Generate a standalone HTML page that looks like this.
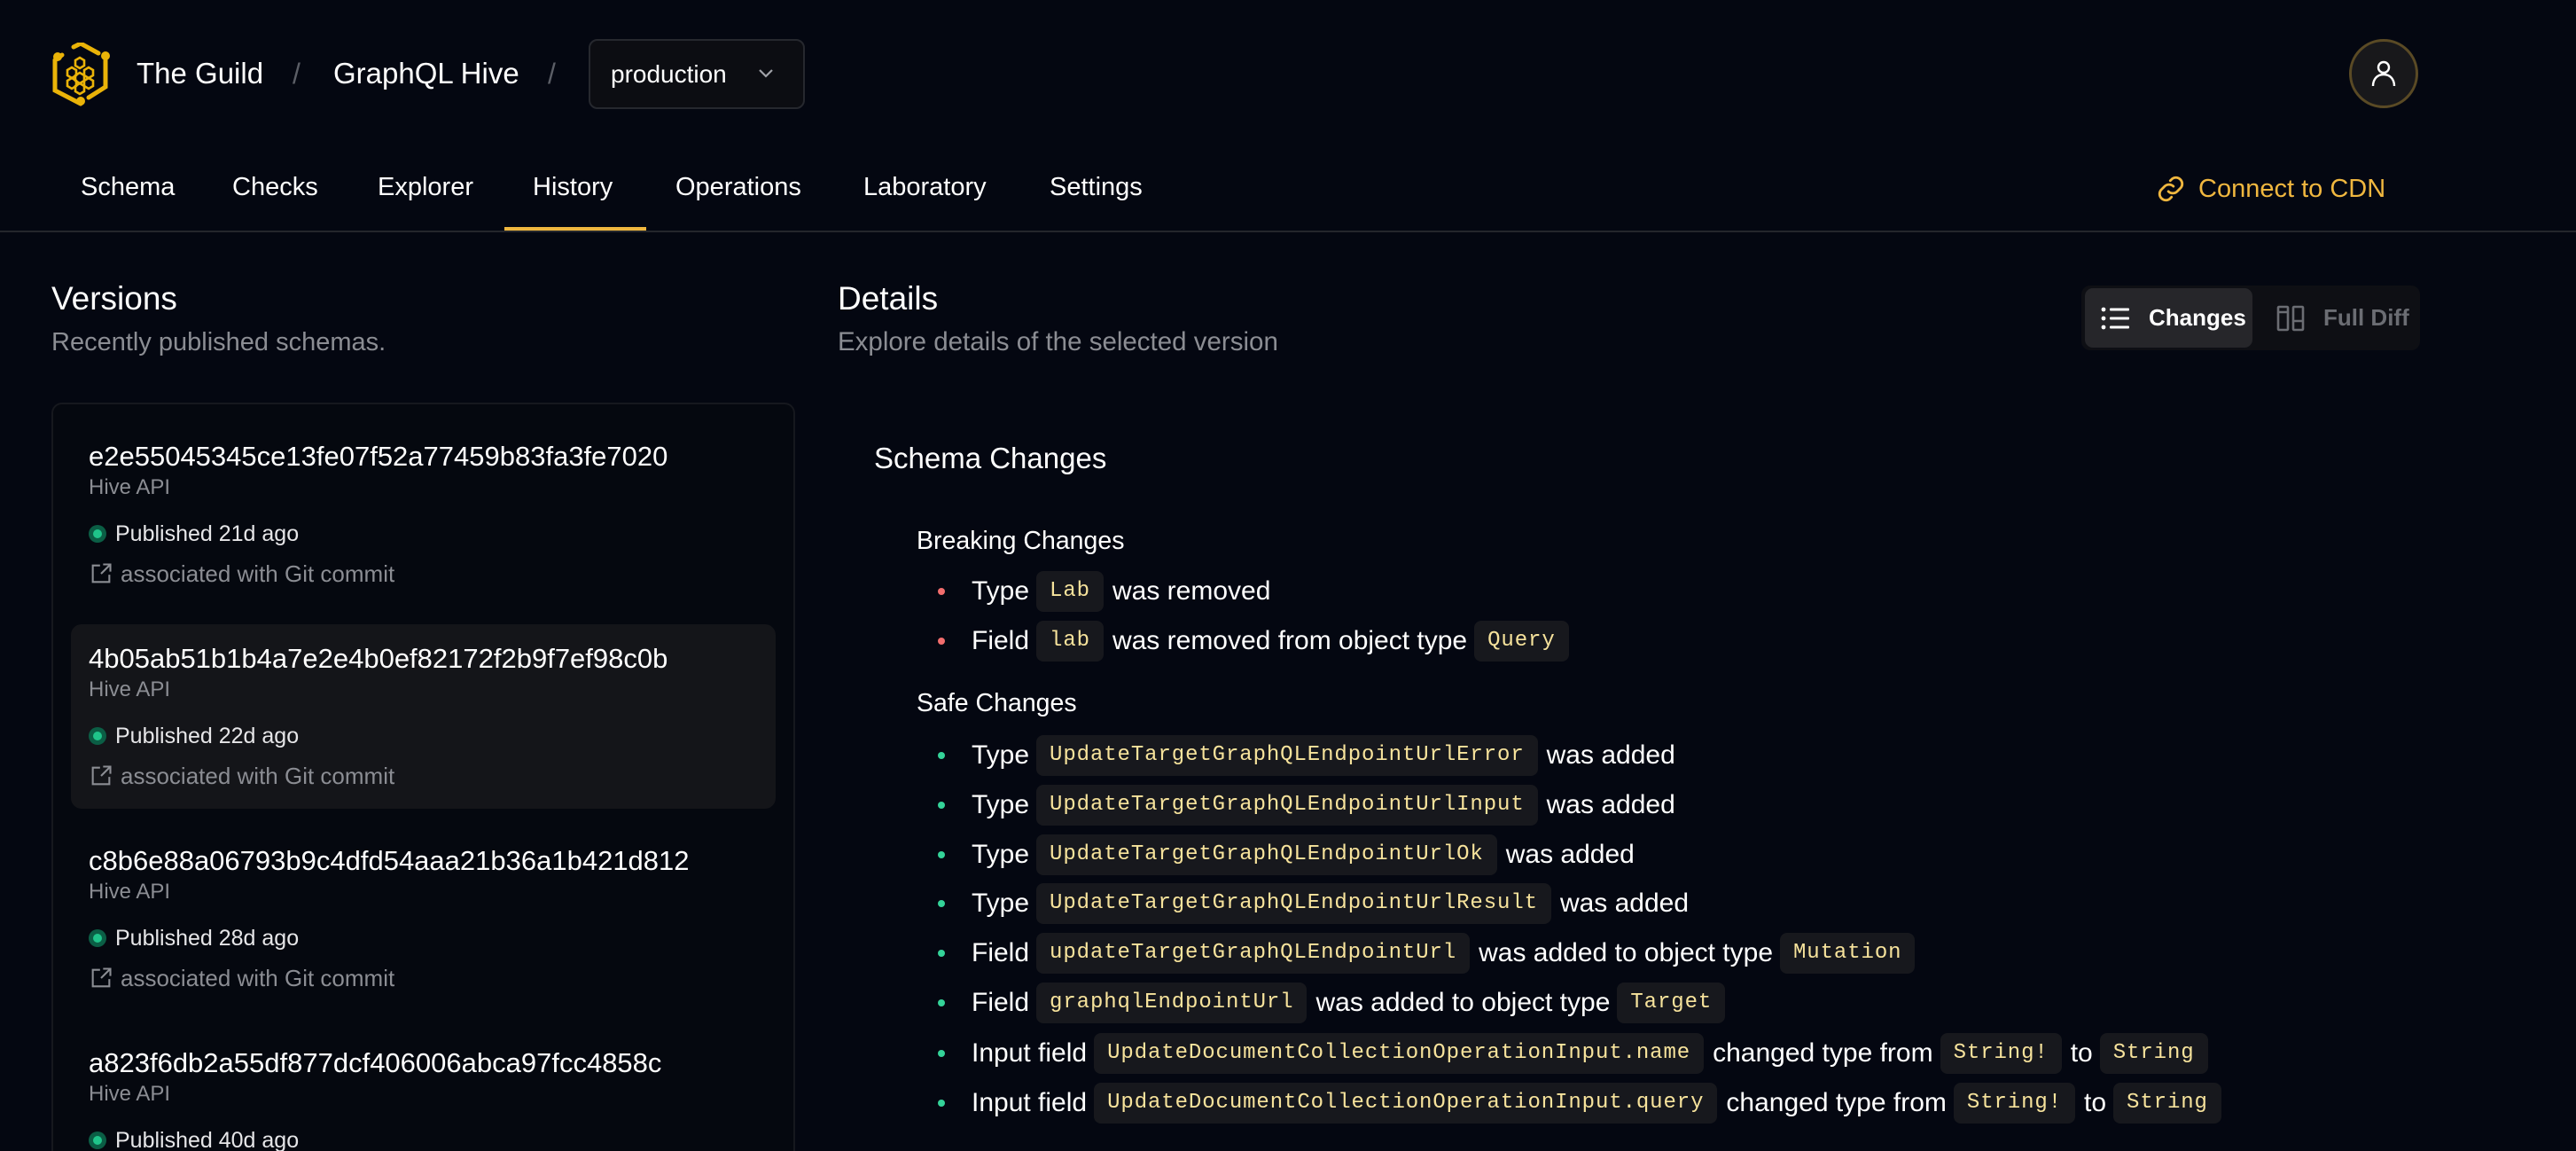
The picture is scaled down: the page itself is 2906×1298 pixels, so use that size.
<!DOCTYPE html>
<html><head><meta charset="utf-8">
<style>
*{margin:0;padding:0;box-sizing:border-box}
html,body{width:2906px;height:1298px;overflow:hidden}
body{background:#040711;color:#fff;font-family:"Liberation Sans",sans-serif;position:relative}
#w{position:absolute;left:0;top:0;width:2906px;height:1298px;overflow:hidden}
.a{position:absolute;white-space:nowrap}
.nav{font-size:29px;line-height:40px;top:191px;color:#fff}
.hash{font-size:31px;line-height:36px;left:100px}
.sub{font-size:24px;line-height:30px;left:100px;color:#8b8d93}
.pub{font-size:25px;line-height:30px;left:100px;color:#e6e6e8;display:flex;align-items:center}
.dot{width:20px;height:20px;border-radius:50%;background:#0b5e45;display:inline-block;position:relative;margin-right:10px}
.dot:after{content:"";position:absolute;left:5px;top:5px;width:10px;height:10px;border-radius:50%;background:#1fc48a}
.assoc{font-size:26px;line-height:30px;left:100px;color:#8b8d93;display:flex;align-items:center}
.row{position:absolute;left:1056px;height:48px;display:flex;align-items:center;font-size:30px;white-space:nowrap}
.b{width:8px;height:8px;border-radius:50%;margin-right:30px;margin-left:2px}
.r{background:#f26d6d}.g{background:#34d399}
.c{font-family:"Liberation Mono",monospace;font-size:24px;letter-spacing:0.9px;color:#f7e39c;background:#17181d;border-radius:8px;height:46px;line-height:46px;padding:0 15px;margin:0 10px 0 8px}
</style></head><body><div id="w">

<svg class="a" style="left:56px;top:48px" width="70" height="72" viewBox="0 0 70 72">
<g fill="none" stroke="#eab308" stroke-width="5" stroke-linecap="round">
<path d="M27 5 L35 1 L55 12"/>
<path d="M63 18 L63 50 L44 62"/>
<path d="M35 69 L6 54 L6 20 L14 14"/>
</g>
<circle cx="9" cy="16" r="5" fill="#eab308"/><circle cx="63" cy="15" r="5" fill="#eab308"/><circle cx="35" cy="66" r="5" fill="#eab308"/>
<g fill="none" stroke="#eab308" stroke-width="2.6">
<path d="M29 20l5-3 5 3v6l-5 3-5-3z"/>
<path d="M20 31l5-3 5 3v6l-5 3-5-3z"/>
<path d="M39 31l5-3 5 3v6l-5 3-5-3z"/>
<path d="M29 37l5-3 5 3v6l-5 3-5-3z"/>
<path d="M20 43l5-3 5 3v6l-5 3-5-3z"/>
<path d="M39 43l5-3 5 3v6l-5 3-5-3z"/>
<path d="M29 49l5-3 5 3v6l-5 3-5-3z"/>
</g>
</svg>
<div class="a" style="left:154px;top:63px;font-size:33px;line-height:40px">The Guild</div>
<div class="a" style="left:330px;top:63px;font-size:32px;line-height:40px;color:#5b5e66">/</div>
<div class="a" style="left:376px;top:63px;font-size:33px;line-height:40px">GraphQL Hive</div>
<div class="a" style="left:618px;top:63px;font-size:32px;line-height:40px;color:#5b5e66">/</div>
<div class="a" style="left:664px;top:44px;width:244px;height:79px;border:2px solid #26282e;border-radius:10px;background:#0c0d12"></div>
<div class="a" style="left:689px;top:66px;font-size:28px;line-height:36px">production</div>
<svg class="a" style="left:854px;top:76px" width="20" height="14" viewBox="0 0 20 14"><path d="M3 3l7 7 7-7" stroke="#a0a2a8" stroke-width="2.2" fill="none"/></svg>

<div class="a" style="left:2650px;top:44px;width:78px;height:78px;border-radius:50%;border:3px solid #5a4a25;background:#18181b"></div>
<svg class="a" style="left:2673px;top:66px" width="32" height="34" viewBox="0 0 32 34"><circle cx="16" cy="10" r="6" stroke="#fff" stroke-width="2.4" fill="none"/><path d="M4 31c0-8 5-13 12-13s12 5 12 13" stroke="#fff" stroke-width="2.4" fill="none"/></svg>

<div class="a nav" style="left:91px">Schema</div>
<div class="a nav" style="left:262px">Checks</div>
<div class="a nav" style="left:426px">Explorer</div>
<div class="a nav" style="left:601px">History</div>
<div class="a nav" style="left:762px">Operations</div>
<div class="a nav" style="left:974px">Laboratory</div>
<div class="a nav" style="left:1184px">Settings</div>
<div class="a" style="left:569px;top:256px;width:160px;height:5px;background:#f0b73f"></div>
<div class="a" style="left:0;top:260px;width:2906px;height:2px;background:#24262c"></div>
<svg class="a" style="left:2432px;top:196px" width="34" height="34" viewBox="0 0 24 24"><g fill="none" stroke="#f0b73f" stroke-width="2" stroke-linecap="round"><path d="M10 14a5 5 0 0 0 7 0l3-3a5 5 0 0 0-7-7l-1.5 1.5"/><path d="M14 10a5 5 0 0 0-7 0l-3 3a5 5 0 0 0 7 7l1.5-1.5"/></g></svg>
<div class="a" style="left:2480px;top:193px;font-size:29px;line-height:40px;color:#f0b73f">Connect to CDN</div>

<div class="a" style="left:58px;top:317px;font-size:37px;line-height:40px">Versions</div>
<div class="a" style="left:58px;top:370px;font-size:29px;line-height:32px;color:#8b8d93">Recently published schemas.</div>
<div class="a" style="left:58px;top:454px;width:839px;height:900px;border:2px solid #16181e;border-radius:12px;background:#05080f"></div>
<div class="a" style="left:80px;top:704px;width:795px;height:208px;border-radius:12px;background:#141519"></div>

<div class="a hash" style="top:497px">e2e55045345ce13fe07f52a77459b83fa3fe7020</div>
<div class="a sub" style="top:535px">Hive API</div>
<div class="a pub" style="top:587px"><span class="dot"></span>Published 21d ago</div>
<div class="a assoc" style="top:632px"><svg width="28" height="28" viewBox="0 0 24 24" style="margin-right:8px"><g fill="none" stroke="#8b8d93" stroke-width="1.8"><path d="M11 4H4v16h16v-7"/><path d="M14 3h7v7M21 3l-9 9"/></g></svg>associated with Git commit</div>

<div class="a hash" style="top:725px">4b05ab51b1b4a7e2e4b0ef82172f2b9f7ef98c0b</div>
<div class="a sub" style="top:763px">Hive API</div>
<div class="a pub" style="top:815px"><span class="dot"></span>Published 22d ago</div>
<div class="a assoc" style="top:860px"><svg width="28" height="28" viewBox="0 0 24 24" style="margin-right:8px"><g fill="none" stroke="#8b8d93" stroke-width="1.8"><path d="M11 4H4v16h16v-7"/><path d="M14 3h7v7M21 3l-9 9"/></g></svg>associated with Git commit</div>

<div class="a hash" style="top:953px">c8b6e88a06793b9c4dfd54aaa21b36a1b421d812</div>
<div class="a sub" style="top:991px">Hive API</div>
<div class="a pub" style="top:1043px"><span class="dot"></span>Published 28d ago</div>
<div class="a assoc" style="top:1088px"><svg width="28" height="28" viewBox="0 0 24 24" style="margin-right:8px"><g fill="none" stroke="#8b8d93" stroke-width="1.8"><path d="M11 4H4v16h16v-7"/><path d="M14 3h7v7M21 3l-9 9"/></g></svg>associated with Git commit</div>

<div class="a hash" style="top:1181px">a823f6db2a55df877dcf406006abca97fcc4858c</div>
<div class="a sub" style="top:1219px">Hive API</div>
<div class="a pub" style="top:1271px"><span class="dot"></span>Published 40d ago</div>

<div class="a" style="left:945px;top:317px;font-size:37px;line-height:40px">Details</div>
<div class="a" style="left:945px;top:370px;font-size:29.5px;line-height:32px;color:#8b8d93">Explore details of the selected version</div>
<div class="a" style="left:2348px;top:322px;width:382px;height:73px;border-radius:10px;background:#0e0f14"></div>
<div class="a" style="left:2352px;top:325px;width:189px;height:67px;border-radius:9px;background:#26262a"></div>
<svg class="a" style="left:2370px;top:345px" width="36" height="28" viewBox="0 0 36 28"><g fill="#fff"><circle cx="3" cy="4" r="2.4"/><circle cx="3" cy="14" r="2.4"/><circle cx="3" cy="24" r="2.4"/><rect x="10" y="2.5" width="22" height="3" rx="1"/><rect x="10" y="12.5" width="22" height="3" rx="1"/><rect x="10" y="22.5" width="22" height="3" rx="1"/></g></svg>
<div class="a" style="left:2424px;top:341px;font-size:26px;line-height:34px;font-weight:bold">Changes</div>
<svg class="a" style="left:2568px;top:344px" width="32" height="30" viewBox="0 0 32 30"><g fill="none" stroke="#6b6d73" stroke-width="2.6"><rect x="2" y="2" width="11" height="26" rx="1"/><rect x="19" y="2" width="11" height="26" rx="1"/><path d="M2 8h11M19 18h11"/></g></svg>
<div class="a" style="left:2621px;top:341px;font-size:26px;line-height:34px;font-weight:bold;color:#6b6d73">Full Diff</div>

<div class="a" style="left:986px;top:497px;font-size:33px;line-height:40px">Schema Changes</div>
<div class="a" style="left:1034px;top:592px;font-size:28.5px;line-height:36px">Breaking Changes</div>
<div class="row" style="top:643px"><span class="b r"></span>Type<span class="c">Lab</span>was removed</div>
<div class="row" style="top:699px"><span class="b r"></span>Field<span class="c">lab</span>was removed from object type<span class="c">Query</span></div>
<div class="a" style="left:1034px;top:775px;font-size:28.5px;line-height:36px">Safe Changes</div>
<div class="row" style="top:828px"><span class="b g"></span>Type<span class="c">UpdateTargetGraphQLEndpointUrlError</span>was added</div>
<div class="row" style="top:884px"><span class="b g"></span>Type<span class="c">UpdateTargetGraphQLEndpointUrlInput</span>was added</div>
<div class="row" style="top:940px"><span class="b g"></span>Type<span class="c">UpdateTargetGraphQLEndpointUrlOk</span>was added</div>
<div class="row" style="top:995px"><span class="b g"></span>Type<span class="c">UpdateTargetGraphQLEndpointUrlResult</span>was added</div>
<div class="row" style="top:1051px"><span class="b g"></span>Field<span class="c">updateTargetGraphQLEndpointUrl</span>was added to object type<span class="c">Mutation</span></div>
<div class="row" style="top:1107px"><span class="b g"></span>Field<span class="c">graphqlEndpointUrl</span>was added to object type<span class="c">Target</span></div>
<div class="row" style="top:1164px"><span class="b g"></span>Input field<span class="c">UpdateDocumentCollectionOperationInput.name</span>changed type from<span class="c">String!</span>to<span class="c">String</span></div>
<div class="row" style="top:1220px"><span class="b g"></span>Input field<span class="c">UpdateDocumentCollectionOperationInput.query</span>changed type from<span class="c">String!</span>to<span class="c">String</span></div>
</div></body></html>
